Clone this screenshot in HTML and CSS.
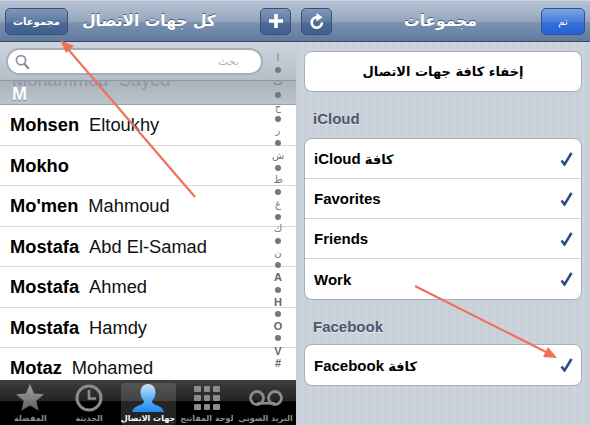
FILE: index.html
```html
<!DOCTYPE html>
<html lang="ar">
<head>
<meta charset="utf-8">
<title>Contacts</title>
<link rel="stylesheet" href="styles.css">
</head>
<body>
<div class="screen">
  <section class="panel contacts">
    <header class="nav">
      <button class="btn btn-text">مجموعات</button>
      <h1 class="nav-title title-left">كل جهات الاتصال</h1>
      <button class="btn btn-icon btn-plus" aria-label="add"><svg width="14" height="14" viewBox="0 0 14 14"><path d="M5.2 0h3.6v5.2H14v3.6H8.8V14H5.2V8.8H0V5.2h5.2z" fill="#fff"/></svg></button>
    </header>
    <div class="search-band">
      <div class="search">
        <svg width="15" height="16" viewBox="0 0 15 16"><circle cx="6" cy="6.2" r="4.6" fill="none" stroke="#8a8f96" stroke-width="1.7"/><path d="M9.4 9.8l3.8 4.4" stroke="#8a8f96" stroke-width="2.2" stroke-linecap="round"/></svg>
        <span class="search-ph">بحث</span>
      </div>
    </div>
    <div class="list-wrap">
      <div class="sec-head"><span class="ghost">Mohammed&nbsp; Sayed</span><span class="sec-letter">M</span></div>
      <div class="row"><b>Mohsen</b><span>Eltoukhy</span></div>
      <div class="row"><b>Mokho</b></div>
      <div class="row"><b>Mo'men</b><span>Mahmoud</span></div>
      <div class="row"><b>Mostafa</b><span>Abd El-Samad</span></div>
      <div class="row"><b>Mostafa</b><span>Ahmed</span></div>
      <div class="row"><b>Mostafa</b><span>Hamdy</span></div>
      <div class="row"><b>Motaz</b><span>Mohamed</span></div>
    </div>
    <nav class="tabbar">
      <div class="tab">
        <svg width="28" height="27" viewBox="0 0 28 27"><defs><linearGradient id="g1" x1="0" y1="0" x2="0" y2="1"><stop offset="0" stop-color="#a5a5a5"/><stop offset="1" stop-color="#5e5e5e"/></linearGradient></defs><path d="M14 0l4 9.4 10 .8-7.700 6.500 2.400 10L14 21.400 5.300 26.700l2.400-10L0 10.200l10-.8z" fill="url(#g1)"/></svg>
        <span>المفضلة</span>
      </div>
      <div class="tab">
        <svg width="28" height="28" viewBox="0 0 28 28"><circle cx="14" cy="14" r="12" fill="none" stroke="#8b8b8b" stroke-width="3"/><path d="M14 6v8.500h7" fill="none" stroke="#8b8b8b" stroke-width="2.600"/></svg>
        <span>الحديثة</span>
      </div>
      <div class="tab tab-on">
        <svg width="32" height="28" viewBox="0 0 32 28"><defs><linearGradient id="g2" x1="0" y1="0" x2="0" y2="1"><stop offset="0" stop-color="#cfe4fb"/><stop offset=".5" stop-color="#5cb2f5"/><stop offset="1" stop-color="#1e8bee"/></linearGradient></defs><path d="M16 0c5 0 7.500 4 7.500 8.500 0 3.500-1.500 6.500-3.500 8.500 0 2 1.500 3 4 4 4 1.500 7 3 8 7H0c1-4 4-5.500 8-7 2.500-1 4-2 4-4-2-2-3.500-5-3.500-8.500C8.500 4 11 0 16 0z" fill="url(#g2)"/></svg>
        <span>جهات الاتصال</span>
      </div>
      <div class="tab">
        <div class="keys"><i></i><i></i><i></i><i></i><i></i><i></i><i></i><i></i><i></i></div>
        <span>لوحة المفاتيح</span>
      </div>
      <div class="tab">
        <svg width="34" height="28" viewBox="0 0 34 28"><circle cx="8" cy="14" r="6.500" fill="none" stroke="#8b8b8b" stroke-width="2.800"/><circle cx="26" cy="14" r="6.500" fill="none" stroke="#8b8b8b" stroke-width="2.800"/><path d="M8 19.200h18" stroke="#8b8b8b" stroke-width="2.800"/></svg>
        <span>البريد الصوتي</span>
      </div>
    </nav>
    <div class="index">
      <span>ا</span><i></i><span>ث</span><i></i><span>خ</span><i></i><span>ر</span><i></i><span>ش</span><i></i><span>ط</span><i></i><span>غ</span><i></i><span>ك</span><i></i><span>ن</span><i></i><span class="latin">A</span><i></i><span class="latin">H</span><i></i><span class="latin">O</span><i></i><span class="latin">V</span><span class="latin">#</span>
    </div>
  </section>

  <section class="panel groups">
    <header class="nav">
      <button class="btn btn-icon btn-refresh" aria-label="refresh"><svg width="16" height="17" viewBox="0 0 16 17"><path d="M13 9.500a5.200 5.200 0 1 1-4.200-5.100" fill="none" stroke="#fff" stroke-width="2.600"/><path d="M7.500 0l6 4.300-6 4.200z" fill="#fff"/></svg></button>
      <h1 class="nav-title title-right">مجموعات</h1>
      <button class="btn btn-done">تم</button>
    </header>
    <div class="groups-body">
      <div class="card hide-all">إخفاء كافة جهات الاتصال</div>
      <h2 class="group-label">iCloud</h2>
      <div class="card">
        <div class="g-row"><b><bdi>iCloud</bdi> <bdi class="ar">كافة</bdi></b><svg class="check" width="13" height="14" viewBox="0 0 13 14"><path d="M1.500 8.500l3 4L11.500 1" fill="none" stroke="#2f4f85" stroke-width="2.600"/></svg></div>
        <div class="g-row"><b>Favorites</b><svg class="check" width="13" height="14" viewBox="0 0 13 14"><path d="M1.500 8.500l3 4L11.500 1" fill="none" stroke="#2f4f85" stroke-width="2.600"/></svg></div>
        <div class="g-row"><b>Friends</b><svg class="check" width="13" height="14" viewBox="0 0 13 14"><path d="M1.500 8.500l3 4L11.500 1" fill="none" stroke="#2f4f85" stroke-width="2.600"/></svg></div>
        <div class="g-row"><b>Work</b><svg class="check" width="13" height="14" viewBox="0 0 13 14"><path d="M1.500 8.500l3 4L11.500 1" fill="none" stroke="#2f4f85" stroke-width="2.600"/></svg></div>
      </div>
      <h2 class="group-label group-label-2">Facebook</h2>
      <div class="card">
        <div class="g-row"><b><bdi>Facebook</bdi> <bdi class="ar">كافة</bdi></b><svg class="check" width="13" height="14" viewBox="0 0 13 14"><path d="M1.500 8.500l3 4L11.500 1" fill="none" stroke="#2f4f85" stroke-width="2.600"/></svg></div>
      </div>
    </div>
  </section>

  <svg class="arrows" width="590" height="425" viewBox="0 0 590 425">
    <path d="M195 197L67 48" stroke="#f0705a" stroke-width="2.200"/>
    <path d="M60 40l14 6-8 7z" fill="#f0705a"/>
    <path d="M415 286L548 353" stroke="#f0705a" stroke-width="2.200"/>
    <path d="M557 358l-14-1 5-10z" fill="#f0705a"/>
  </svg>
</div>
</body>
</html>
```
FILE: styles.css
```css
* { box-sizing: border-box; }
html, body { margin: 0; padding: 0; }
body { font-family: "Liberation Sans", "DejaVu Sans", sans-serif; background: #000; }
.screen { position: relative; display: flex; width: 590px; height: 425px; overflow: hidden; }
.panel { position: relative; display: flex; flex-direction: column; height: 425px; }
.contacts { width: 296px; background: #fff; }
.groups { width: 294px; background: repeating-linear-gradient(90deg, #c9d0d9 0, #c9d0d9 5px, #ced4dc 5px, #ced4dc 8px); }

.nav { flex: none; display: flex; align-items: center; justify-content: space-between; height: 42px; padding: 0 5px; background: linear-gradient(#b7c3d4 0, #95a8c0 50%, #7b91b0 55%, #5f7aa0 100%); border-top: 1px solid #cdd5e0; border-bottom: 1px solid #39465a; }
.nav-title { margin: 0; font: bold 15.500px "DejaVu Sans", sans-serif; color: #fff; text-shadow: 0 -1px 0 #4a5c75; white-space: nowrap; }
.title-left { flex: 1; text-align: center; padding-right: 30px; }
.title-right { padding-left: 8px; }
.btn { display: flex; align-items: center; justify-content: center; height: 27px; padding: 0; border: 1px solid #3c506e; border-radius: 5px; color: #fff; font: bold 10px "DejaVu Sans", sans-serif; background: linear-gradient(#7f97b8 0, #5d7ba4 50%, #4c6b96 55%, #3f5f8c 100%); }
.btn-text { width: 63px; }
.btn-icon { width: 31px; }
.btn-done { width: 44px; font-weight: normal; background: linear-gradient(#7aa3e6 0, #4a7fdc 50%, #3670d8 55%, #2460d6 100%); border-color: #33528a; }

.search-band { flex: none; height: 39px; padding: 6px 33px 6px 6px; background: linear-gradient(#cdd5de, #b4bfca); border-bottom: 1px solid #8f99a5; }
.search { display: flex; align-items: center; justify-content: space-between; height: 27px; padding: 0 22px 0 7px; background: #fff; border: 2px solid #a4adb8; border-radius: 14px; }
.search-ph { font: 11px "DejaVu Sans", sans-serif; color: #b3b3b3; }

.list-wrap { flex: 1; overflow: hidden; }
.sec-head { position: relative; height: 24px; overflow: hidden; background: linear-gradient(#a8b2bc, #bcc4cc); border-bottom: 1px solid #9aa3ac; }
.ghost { position: absolute; left: 12px; top: -12px; font-size: 18.300px; line-height: 21px; color: #8f98a2; white-space: nowrap; }
.sec-letter { position: absolute; left: 12px; top: 4px; font-size: 18px; line-height: 19px; font-weight: bold; color: #fff; text-shadow: 0 1px 0 #7f8791; }
.row { display: flex; align-items: center; gap: 10px; height: 40.500px; padding: 1px 0 0 10px; border-bottom: 1px solid #dcdcdc; font-size: 18.300px; color: #111; white-space: nowrap; }
.row b { font-weight: bold; color: #000; }

.tabbar { flex: none; display: flex; height: 45px; padding: 3px 1px 0; background: linear-gradient(#3e3e3e 0, #232323 47%, #000 48%, #000 100%); }
.tab { flex: 1; display: flex; flex-direction: column; align-items: center; justify-content: space-between; height: 42px; margin: 0; padding: 1px 0 2px; border-radius: 3px; color: #8f8f8f; font: bold 8px "DejaVu Sans", sans-serif; white-space: nowrap; }
.tab-on { flex: none; width: 55px; margin: 0 2px; background: rgba(255, 255, 255, .14); color: #fff; }
.keys { display: grid; grid-template-columns: repeat(3, 6.500px); grid-auto-rows: 6px; gap: 3px; padding-top: 2px; }
.keys i { background: #8b8b8b; border-radius: 1px; }

.index { position: absolute; right: 9px; top: 52px; width: 18px; display: flex; flex-direction: column; align-items: center; font: 10px/12.200px "DejaVu Sans", sans-serif; color: #777; }
.index span { display: block; height: 12.200px; }
.index .latin { font: bold 11px/12.200px "Liberation Sans", sans-serif; color: #666; }
.index i { display: block; width: 6px; height: 6px; margin: 3.100px 0; background: #777; border-radius: 50%; }

.groups-body { flex: 1; padding: 9px 8px 0 8px; }
.card { background: #fff; border: 1px solid #a9afb8; border-radius: 8px; overflow: hidden; }
.hide-all { height: 41px; display: flex; align-items: center; justify-content: center; font: bold 13px "DejaVu Sans", sans-serif; color: #000; }
.group-label { margin: 0; height: 46px; padding: 18px 0 0 9px; font-size: 15px; line-height: 17px; color: #4c566d; text-shadow: 0 1px 0 #e4e8ec; }
.group-label-2 { height: 44px; }
.g-row { display: flex; align-items: center; justify-content: space-between; height: 40px; padding: 0 8px 0 9px; border-bottom: 1px solid #d4d4d4; font-size: 15px; color: #000; }
.g-row:last-child { border-bottom: 0; }
.ar { font: bold 13px "DejaVu Sans", sans-serif; }
.arrows { position: absolute; left: 0; top: 0; pointer-events: none; }
```
